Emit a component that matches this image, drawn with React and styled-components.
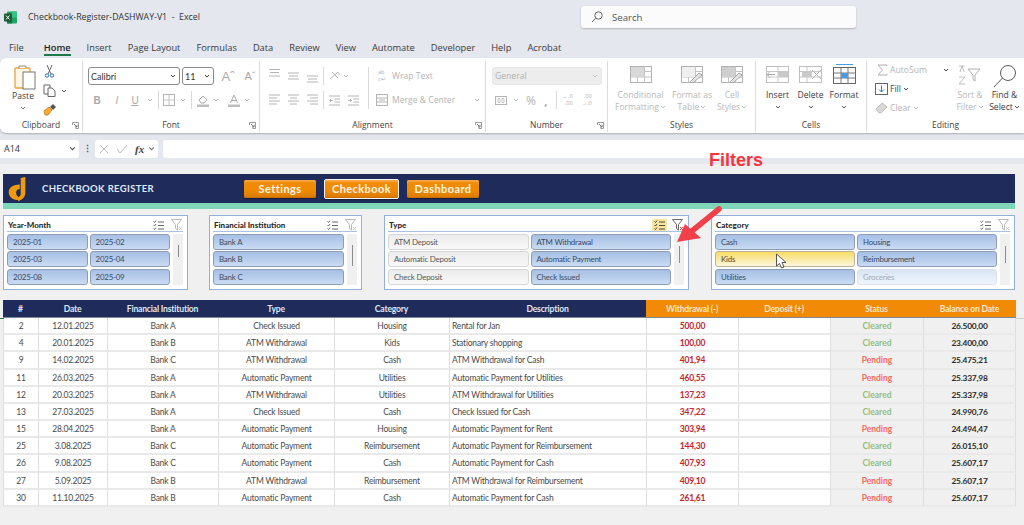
import React from "react";
import styled, { createGlobalStyle, css } from "styled-components";

const GlobalStyle = createGlobalStyle`
  html, body {
    margin: 0;
    width: 1024px;
    height: 525px;
    overflow: hidden;
    background: #e4e7ed;
    font-family: "Open Sans", "Liberation Sans", sans-serif;
  }
  * { box-sizing: border-box; }
`;

const Page = styled.div`
  position: relative;
  display: flex;
  flex-direction: column;
  width: 1024px;
  height: 525px;
  overflow: hidden;
`;

/* ---- title bar ---- */
const TitleBar = styled.div`
  display: flex;
  align-items: center;
  height: 34px;
  padding: 0 0 0 4px;
  color: #333;
  font-size: 8.8px;
`;
const WindowTitle = styled.span`
  margin-left: 11px;
  width: 553px;
  white-space: pre;
`;
const SearchBox = styled.div`
  display: flex;
  align-items: center;
  gap: 9px;
  width: 275px;
  height: 22px;
  padding-left: 10px;
  background: #fbfbfc;
  border-radius: 3px;
  box-shadow: 0 1px 2px rgba(0, 0, 0, 0.22);
  color: #555;
  font-size: 9.6px;
`;

/* ---- tabs ---- */
const TabBar = styled.div`
  display: flex;
  gap: 16px;
  height: 24px;
  padding: 6px 0 0 9px;
  font-size: 9.3px;
  color: #3a3a3a;
`;
const Tab = styled.div`
  position: relative;
  height: 15px;
  line-height: 15px;
  &:first-child {
    margin-right: 4px;
  }
  ${(p) =>
    p.$active &&
    css`
      font-weight: 600;
      color: #222;
      &::after {
        content: "";
        position: absolute;
        left: 0;
        right: 0;
        bottom: -1px;
        height: 2px;
        background: #1b7a47;
      }
    `}
`;

/* ---- ribbon ---- */
const Ribbon = styled.div`
  display: flex;
  height: 75px;
  background: #fff;
  border-radius: 6px 0 0 6px;
  box-shadow: 0 1px 2px rgba(0, 0, 0, 0.25);
`;
const Group = styled.div`
  position: relative;
  display: flex;
  flex-direction: column;
  flex: 0 0 ${(p) => p.$w}px;
  min-width: 0;
  margin: 3px 0 1px;
  border-right: ${(p) => (p.$last ? "none" : "1px solid #dcdcdc")};
`;
const GroupBody = styled.div`
  flex: 1;
  display: flex;
  padding: ${(p) => p.$pad || "0"};
`;
const GroupLabel = styled.div`
  height: 14px;
  text-align: center;
  font-size: 8.5px;
  line-height: 14px;
  color: #444;
`;
const Launcher = styled.svg`
  position: absolute;
  right: 3px;
  bottom: 3px;
  width: 7px;
  height: 7px;
`;
const Rows = styled.div`
  display: flex;
  flex-direction: column;
  gap: ${(p) => p.$gap ?? 6}px;
  flex: ${(p) => (p.$w ? `0 0 ${p.$w}px` : "0 1 auto")};
  margin-left: ${(p) => p.$ml || 0}px;
`;
const Row = styled.div`
  display: flex;
  align-items: center;
  gap: ${(p) => p.$gap || 0}px;
  height: ${(p) => p.$h || 18}px;
  margin-left: ${(p) => p.$ml || 0}px;
`;
const Space = styled.span`
  flex: 0 0 ${(p) => p.$w}px;
`;
const PullBack = styled.span`
  display: flex;
  margin-left: -6px;
`;
const Select = styled.div`
  display: flex;
  align-items: center;
  justify-content: space-between;
  width: ${(p) => p.$w}px;
  height: 18px;
  padding: 0 3px 0 2px;
  font-size: ${(p) => (p.$off ? 8.6 : 9)}px;
  border-radius: 3px;
  color: ${(p) => (p.$off ? "#b0b0b0" : "#333")};
  border: 1px solid ${(p) => (p.$off ? "#e6e6e6" : "#8a8a8a")};
  background: ${(p) => (p.$off ? "#ededed" : "#fff")};
  font-family: ${(p) => (p.$off ? '"Open Sans", sans-serif' : "Lato, sans-serif")};
`;
const Sep = styled.div`
  flex: 0 0 1px;
  height: 18px;
  margin: 0 ${(p) => p.$m || 0}px;
  background: #d9d9d9;
`;
const AlignBlock = styled.div`
  display: flex;
  flex-direction: column;
  gap: 6px;
  flex: 0 0 100px;
  height: 42px;
  border-right: 1px solid #d9d9d9;
`;
const MergeBlock = styled.div`
  display: flex;
  flex-direction: column;
  gap: 6px;
  padding-left: 8px;
`;
const GreyText = styled.span`
  font-size: ${(p) => p.$size || 8.6}px;
  font-weight: ${(p) => p.$weight || 400};
  color: ${(p) => (p.$on ? "#444" : "#b4b4b4")};
  margin-left: ${(p) => p.$ml || 0}px;
  white-space: pre;
`;
const FontGlyph = styled.span`
  flex: 0 0 ${(p) => p.$w || 18}px;
  text-align: center;
  font-family: "Liberation Sans", sans-serif;
  font-size: ${(p) => p.$size || 10}px;
  font-weight: ${(p) => (p.$bold ? 700 : 400)};
  font-style: ${(p) => (p.$italic ? "italic" : "normal")};
  text-decoration: ${(p) => (p.$under ? "underline" : "none")};
  color: #a8a8a8;
`;
const TinyStack = styled.span`
  display: flex;
  flex-direction: column;
  align-items: ${(p) => (p.$end ? "flex-end" : "flex-start")};
  flex: 0 0 ${(p) => p.$w || 12}px;
  font-size: 5.6px;
  line-height: 7px;
  color: #b0b0b0;
  white-space: pre;
`;
const BigButton = styled.div`
  display: flex;
  flex-direction: column;
  align-items: center;
  flex: 0 0 ${(p) => p.$w}px;
  margin-top: ${(p) => p.$mt || 0}px;
  font-size: 8.6px;
  line-height: 12px;
  color: ${(p) => (p.$off ? "#b8b8b8" : "#3c3c3c")};
  text-align: center;
  white-space: nowrap;
  > svg {
    margin-top: 3px;
  }
`;
const BigIcon = styled.div`
  height: ${(p) => p.$h || 25}px;
  padding-top: ${(p) => p.$top ?? 2}px;
  display: flex;
  align-items: flex-start;
  justify-content: center;
`;
const LabelLine = styled.span`
  display: inline-flex;
  align-items: center;
  gap: 1px;
`;

/* ---- formula bar ---- */
const FormulaBar = styled.div`
  display: flex;
  align-items: center;
  height: 19px;
  margin-top: 6px;
`;
const NameBox = styled.div`
  display: flex;
  align-items: center;
  justify-content: space-between;
  width: 79px;
  height: 18px;
  padding: 0 3px 0 4px;
  background: #fff;
  border-radius: 0 3px 3px 0;
  font-size: 9px;
  color: #333;
`;
const Dots = styled.div`
  width: 16px;
  text-align: center;
  font-size: 9px;
  font-weight: 700;
  color: #555;
  line-height: 18px;
`;
const FxBox = styled.div`
  display: flex;
  align-items: center;
  gap: 7px;
  width: 63px;
  height: 18px;
  padding-left: 4px;
  background: #fff;
  border-radius: 3px;
`;
const FxText = styled.span`
  margin-right: -3px;
  font-family: "Liberation Serif", serif;
  font-style: italic;
  font-weight: 700;
  font-size: 11px;
  color: #444;
`;
const FormulaInput = styled.div`
  flex: 1;
  height: 18px;
  margin-left: 5px;
  background: #fff;
  border-radius: 3px 0 0 3px;
`;
const Strip = styled.div`
  height: 6px;
`;

/* ---- sheet ---- */
const Sheet = styled.div`
  flex: 1;
  padding: 10px 0 0 3px;
  background: #f0f0f0;
  font-family: Lato, "Open Sans", sans-serif;
`;
const Banner = styled.div`
  display: flex;
  align-items: center;
  width: 1012px;
  height: 35px;
  padding: 0 0 0 5px;
  background: #1f2c5b;
  border-bottom: 6px solid #7fd6b9;
`;
const BannerTitle = styled.div`
  width: 202px;
  margin-left: 15px;
  color: #dfe6f2;
  font-size: 9.5px;
  font-weight: 700;
  letter-spacing: 0.35px;
`;
const NavGroup = styled.div`
  display: flex;
  align-items: center;
  gap: 8px;
`;
const NavButton = styled.div`
  display: flex;
  align-items: center;
  justify-content: center;
  width: ${(p) => p.$w}px;
  height: ${(p) => (p.$active ? 20 : 18)}px;
  background: linear-gradient(#ef8d0e, #f08a02 55%, #d97a00);
  border-radius: 2px;
  border: ${(p) => (p.$active ? "1.5px solid #f2f4f8" : "none")};
  box-shadow: inset 0 2px 0 #f5a33c, inset 0 -1px 0 #c86f00, 0 1px 1px rgba(0, 0, 0, 0.35);
  color: #fdf4e3;
  font-size: 11px;
  font-weight: 700;
  letter-spacing: 0.4px;
`;
const Slicers = styled.div`
  display: flex;
  margin-top: 6px;
`;
const Slicer = styled.div`
  display: flex;
  flex-direction: column;
  flex: 0 0 ${(p) => p.$w}px;
  margin-right: ${(p) => p.$mr || 0}px;
  height: 75px;
  padding: 3px 4px 4px 3px;
  background: #fff;
  border: 1px solid #93b0da;
`;
const SlicerHead = styled.div`
  display: flex;
  align-items: center;
  justify-content: space-between;
  height: 13px;
  margin-bottom: 2px;
  padding: 0 0 1px 1px;
  border-bottom: 1px solid #a9c2e4;
  font-size: 8px;
  font-weight: 900;
  color: #2c2c2c;
`;
const SlicerTools = styled.div`
  display: flex;
  align-items: center;
  gap: 7px;
`;
const ToolBox = styled.div`
  display: flex;
  padding: 1px 2px;
  margin-right: -2px;
  background: ${(p) => (p.$on ? "#f7e4a0" : "transparent")};
  border-radius: 1px;
`;
const SlicerBody = styled.div`
  flex: 1;
  display: flex;
  gap: 3px;
`;
const ItemGrid = styled.div`
  flex: 1;
  display: grid;
  grid-template-columns: repeat(${(p) => p.$cols}, 1fr);
  grid-auto-rows: 16px;
  gap: 1.4px 2px;
`;
const itemStates = {
  on: css`
    background: linear-gradient(#a6bfe4, #c9dbf3);
    border-color: #8e9db5;
    color: #3a4a63;
  `,
  off: css`
    background: linear-gradient(#ececec, #f8f8f8);
    border-color: #d6d6d6;
    color: #565656;
  `,
  hover: css`
    background: linear-gradient(#f8dc64, #fdf6dd);
    border-color: #b9b39a;
    color: #4f4a32;
  `,
  empty: css`
    background: linear-gradient(#d9e5f5, #eef4fc);
    border-color: #dde3ec;
    color: #a9a9a9;
  `,
};
const Item = styled.div`
  display: flex;
  align-items: center;
  padding-left: 5px;
  border: 1px solid;
  border-radius: 3px;
  font-size: 7.9px;
  letter-spacing: -0.2px;
  ${(p) => itemStates[p.$state || "on"]}
`;
const ScrollTrack = styled.div`
  position: relative;
  flex: 0 0 10px;
  background: #f0f0f0;
  &::after {
    content: "";
    position: absolute;
    left: 50%;
    top: ${(p) => p.$top || 12}px;
    width: 1px;
    height: ${(p) => p.$h || 12}px;
    background: #8b8b8b;
  }
`;

/* ---- table ---- */
const Table = styled.div`
  display: grid;
  grid-template-columns: 35px 69px 111px 116px 115px 197px 92px 92px 93px 93px;
  grid-template-rows: 18px;
  grid-auto-rows: 17.18px;
  margin-top: 10px;
  width: 1013px;
  letter-spacing: -0.2px;
`;
const HeadCell = styled.div`
  display: flex;
  align-items: center;
  justify-content: center;
  background: ${(p) => (p.$orange ? "#f28a05" : "#1f2c5b")};
  color: ${(p) => (p.$orange ? "#fbe6c8" : "#dfe6f2")};
  border-bottom: 1px solid #7d8799;
  font-size: 8.6px;
  font-weight: 700;
  &:last-of-type {
    margin-right: 1px;
  }
`;
const cellKinds = {
  plain: css`
    color: #4a4a4a;
  `,
  desc: css`
    justify-content: flex-start;
    padding-left: 2px;
    color: #4a4a4a;
  `,
  out: css`
    color: #c6242f;
    font-weight: 700;
  `,
  cleared: css`
    background: #f0f0f0;
    color: #94bd7f;
    font-weight: 700;
    letter-spacing: 0;
  `,
  pending: css`
    background: #f0f0f0;
    color: #fb6a60;
    font-weight: 700;
    letter-spacing: 0;
  `,
  balance: css`
    background: #f0f0f0;
    color: #2b2b2b;
    font-weight: 700;
    font-size: 8.4px;
    border-right: 1px solid #dedede;
  `,
};
const Cell = styled.div`
  display: flex;
  align-items: center;
  justify-content: center;
  padding-top: 1px;
  background: #fff;
  border-left: 1px solid #dedede;
  border-bottom: 2px solid #e9e9e9;
  font-size: 8.5px;
  white-space: nowrap;
  ${(p) => cellKinds[p.$kind || "plain"]}
`;

/* ---- things laid over the picture ---- */
const FiltersNote = styled.div`
  position: absolute;
  left: 709px;
  top: 150px;
  color: #f5363f;
  font-family: "Liberation Sans", sans-serif;
  font-size: 18px;
  font-weight: 700;
  line-height: 21px;
`;
const Overlay = styled.svg`
  position: absolute;
  left: ${(p) => p.$x}px;
  top: ${(p) => p.$y}px;
`;
const CellMark = styled.div`
  position: absolute;
  left: 0;
  top: 318px;
  width: 4px;
  height: 1px;
  background: #1b7a47;
`;
const SheetEdge = styled.div`
  position: absolute;
  left: 1016px;
  right: 0;
  top: 318px;
  height: 1px;
  background: #cfcfcf;
`;

/* ---- small drawings ---- */
const Chev = ({ c = "#777", s = 6 }) => (
  <svg width={s} height={s} viewBox="0 0 6 6">
    <path d="M1 2l2 2 2-2" fill="none" stroke={c} strokeWidth="1" />
  </svg>
);
const Draw = ({ w, h, children }) => (
  <svg width={w} height={h} viewBox={`0 0 ${w} ${h}`} fill="none">
    {children}
  </svg>
);
const Lines = ({ ys, xs }) => (
  <Draw w={11} h={14}>
    {ys.map((y, i) => (
      <path key={i} d={`M${xs[i][0]} ${y}H${xs[i][1]}`} stroke="#b4b4b4" />
    ))}
  </Draw>
);
const DialogMark = () => (
  <Launcher viewBox="0 0 7 7" fill="none">
    <path d="M.5 3V.5H6.500V6.500H3.500" stroke="#9a9a9a" />
    <path d="M2 2l3 3M5 3v2H3" stroke="#777" />
  </Launcher>
);
const MultiSelect = ({ on }) => (
  <Draw w={11} h={10}>
    {[1.5, 5, 8.5].map((y) => (
      <g key={y}>
        <path d={`M.5 ${y}l1 1 1.500-2`} stroke={on ? "#4d4a36" : "#666"} />
        <path d={`M5 ${y + 0.5}H11`} stroke={on ? "#4d4a36" : "#666"} />
      </g>
    ))}
  </Draw>
);
const ClearFilter = ({ on }) => (
  <Draw w={12} h={12}>
    <path d="M.5.5h10L6.500 5.500V11L4.500 9.500V5.500z" stroke={on ? "#666" : "#b9b9b9"} />
    <path d="M8 8l3 3M11 8l-3 3" stroke={on ? "#e0403c" : "#c9c9c9"} />
  </Draw>
);
const Logo = () => (
  <svg width="19" height="24" viewBox="0 0 19 26">
    <path d="M13 1l5-1v17c0 5-4 8-8 9v-4c2-.5 3-2 3-4z" fill="#f29a0e" />
    <path d="M12 8v5c-2 0-4 1-4 4s2 4 2 4v4C5 25 0 22 0 16.500 0 11 5 8 12 8z" fill="#f29a0e" />
  </svg>
);
const ExcelIcon = () => (
  <svg width="13" height="13" viewBox="0 0 13 13">
    <rect x="3" y="0.5" width="10" height="12" rx="1" fill="#21a366" />
    <rect x="8" y="0.5" width="5" height="6" fill="#33c481" />
    <rect x="3" y="6.500" width="5" height="6" fill="#107c41" />
    <rect x="0" y="2.500" width="8" height="8" rx="1" fill="#185c37" />
    <path d="M2 4.500l3.500 4M5.500 4.500l-3.500 4" stroke="#fff" strokeWidth="1" />
  </svg>
);
const SearchIcon = () => (
  <Draw w={12} h={12}>
    <circle cx="7.500" cy="4.500" r="3.700" stroke="#666" />
    <path d="M4.800 7.200L1 11" stroke="#666" />
  </Draw>
);
const PasteIcon = () => (
  <Draw w={26} h={26}>
    <g transform="translate(4)">
      <rect x="1" y="4" width="15" height="20" rx="1" stroke="#e8a33c" strokeWidth="1.300" fill="#fff6e6" />
      <path d="M5 4V2h7v2" stroke="#8d8d8d" fill="#fff" />
      <rect x="9" y="8" width="12" height="17" fill="#fff" stroke="#777" />
    </g>
  </Draw>
);
const CutIcon = () => (
  <Draw w={13} h={13}>
    <path d="M4 0l4 9M9 0L5 9" stroke="#666" />
    <circle cx="4" cy="10.500" r="1.700" stroke="#2a6fc0" />
    <circle cx="9" cy="10.500" r="1.700" stroke="#2a6fc0" />
  </Draw>
);
const CopyIcon = () => (
  <Draw w={13} h={13}>
    <path d="M1 1h6v9H1z" stroke="#666" fill="#fff" />
    <path d="M5 4h4l3 3v5.500H5z" stroke="#666" fill="#fff" />
  </Draw>
);
const PainterIcon = () => (
  <Draw w={13} h={12}>
    <path d="M1 7l5-4 3 3-4 5H2z" fill="#f6a93b" stroke="#d58a1e" />
    <path d="M7 3l3-3 3 3-3 3z" fill="#555" />
  </Draw>
);
const BorderIcon = () => (
  <Draw w={12} h={12}>
    <rect x=".5" y=".5" width="11" height="11" stroke="#b4b4b4" />
    <path d="M6 .5v11M.5 6h11" stroke="#c4c4c4" />
  </Draw>
);
const FillIcon = () => (
  <Draw w={12} h={13}>
    <path d="M2 6l4-4 4 4-3 3H4z" stroke="#a8a8a8" />
    <rect x="0" y="10.500" width="12" height="2.500" fill="#bdbdbd" />
  </Draw>
);
const FontColorIcon = () => (
  <Draw w={12} h={13}>
    <path d="M2.500 9L6 1l3.500 8M3.800 6.500h4.400" stroke="#a8a8a8" />
    <rect x="0" y="10.500" width="12" height="2.500" fill="#bdbdbd" />
  </Draw>
);
const OrientIcon = () => (
  <Draw w={12} h={12}>
    <path d="M1 9L9 2M3 2l6 6" stroke="#b4b4b4" />
    <path d="M9 2l2 3" stroke="#c9c9c9" />
  </Draw>
);
const IndentIcon = ({ flip }) => (
  <Draw w={11} h={11}>
    <path d="M0 1h11M0 10h11M5.500 4H11M5.500 7H11" stroke="#b4b4b4" />
    <path d={flip ? "M0 5.500h3.500M2 4l1.500 1.500L2 7" : "M4 5.500H.5M2 4L.5 5.500 2 7"} stroke="#b4b4b4" />
  </Draw>
);
const MergeIcon = () => (
  <Draw w={12} h={12}>
    <rect x=".5" y=".5" width="11" height="11" stroke="#b4b4b4" />
    <path d="M.5 4h11M.5 8h11M3 6h6" stroke="#b4b4b4" />
  </Draw>
);
const CurrencyIcon = () => (
  <Draw w={12} h={11}>
    <rect x=".5" y="1.500" width="11" height="8" stroke="#b4b4b4" />
    <path d="M3 3.500h2v4H3zM7 3.500h2v4H7z" stroke="#c6c6c6" />
  </Draw>
);
const StyleGrid = ({ tint = "#d8d8d8", brush }) => (
  <Draw w={22} h={17}>
    <rect x=".5" y=".5" width="21" height="16" stroke="#b0b0b0" />
    <path d="M7.500.5v16M14.500.5v16M.5 5.500h21M.5 11h21" stroke="#c4c4c4" />
    <rect x="1" y="1" width="13" height="10" fill={tint} />
    {brush && <path d="M9 16l9-9 3 2-9 8z" fill="#e4e4e4" stroke="#a8a8a8" />}
  </Draw>
);
const InsertCells = () => (
  <Draw w={23} h={17}>
    <rect x=".5" y=".5" width="22" height="16" stroke="#c0c0c0" />
    <path d="M.5 5.500h22M.5 11h22M12 .5v16" stroke="#c8c8c8" />
    <rect x="12" y="6" width="10" height="5" fill="#c8c8c8" />
    <path d="M9 8.500H1M4 5.500l-3 3 3 3" stroke="#a9a9a9" fill="#fff" />
  </Draw>
);
const DeleteCells = () => (
  <Draw w={23} h={17}>
    <rect x=".5" y=".5" width="22" height="16" stroke="#c0c0c0" />
    <path d="M.5 5.500h22M.5 11h22M8 .5v16" stroke="#c8c8c8" />
    <rect x="3" y="6" width="10" height="5" fill="#c8c8c8" />
    <path d="M13 4l9 9M22 4l-9 9" stroke="#b4b4b4" />
  </Draw>
);
const FormatCells = () => (
  <Draw w={23} h={21}>
    <path d="M3 .5h17" stroke="#4a9be0" />
    <rect x=".5" y="3.500" width="22" height="16" stroke="#666" fill="#fff" />
    <path d="M.5 9h22M.5 14h22M8 3.500v16M15 3.500v16" stroke="#777" />
    <rect x="8" y="9" width="7" height="5" fill="#4a9be0" />
  </Draw>
);
const SigmaIcon = () => (
  <Draw w={11} h={12}>
    <path d="M10 2V1H1l4.500 5L1 11h9v-1" stroke="#b0b0b0" />
  </Draw>
);
const FillDown = () => (
  <Draw w={13} h={12}>
    <rect x=".5" y=".5" width="12" height="11" stroke="#666" />
    <path d="M6.500 2.500v6M4 6.500l2.500 2.500L9 6.500" stroke="#2a7ad0" />
  </Draw>
);
const EraserIcon = () => (
  <Draw w={13} h={12}>
    <path d="M1 7l6-6 5 4-6 6H4z" fill="#d8d8d8" stroke="#bdbdbd" />
  </Draw>
);
const SortIcon = () => (
  <Draw w={24} h={22}>
    <path d="M1 2h6M2 8l2-6 2 6M1 13h6l-6 7h6" stroke="#bdbdbd" />
    <path d="M10 5h12l-5 6v6l-2-1.500V11z" stroke="#b0b0b0" />
  </Draw>
);
const FindIcon = () => (
  <Draw w={24} h={24}>
    <circle cx="15" cy="9" r="7.500" stroke="#5a5a5a" />
    <path d="M9.500 14L1 23" stroke="#5a5a5a" />
  </Draw>
);

/* ---- data ---- */
const rows = [
  ["2", "12.01.2025", "Bank A", "Check Issued", "Housing", "Rental for Jan", "500,00", "Cleared", "26.500,00"],
  ["4", "20.01.2025", "Bank B", "ATM Withdrawal", "Kids", "Stationary shopping", "100,00", "Cleared", "23.400,00"],
  ["9", "14.02.2025", "Bank C", "ATM Withdrawal", "Cash", "ATM Withdrawal for Cash", "401,94", "Pending", "25.475,21"],
  ["11", "26.03.2025", "Bank A", "Automatic Payment", "Utilities", "Automatic Payment for Utilities", "460,55", "Pending", "25.337,98"],
  ["12", "20.03.2025", "Bank A", "ATM Withdrawal", "Utilities", "ATM Withdrawal for Utilities", "137,23", "Cleared", "25.337,98"],
  ["13", "27.03.2025", "Bank A", "Check Issued", "Cash", "Check Issued for Cash", "347,22", "Cleared", "24.990,76"],
  ["15", "28.04.2025", "Bank A", "Automatic Payment", "Housing", "Automatic Payment for Rent", "303,94", "Pending", "24.494,47"],
  ["25", "3.08.2025", "Bank C", "Automatic Payment", "Reimbursement", "Automatic Payment for Reimbursement", "144,30", "Cleared", "26.015,10"],
  ["26", "9.08.2025", "Bank C", "Automatic Payment", "Cash", "Automatic Payment for Cash", "407,93", "Cleared", "25.607,17"],
  ["27", "5.09.2025", "Bank B", "ATM Withdrawal", "Reimbursement", "ATM Withdrawal for Reimbursement", "409,10", "Pending", "25.607,17"],
  ["30", "11.10.2025", "Bank B", "Automatic Payment", "Cash", "Automatic Payment for Cash", "261,61", "Pending", "25.607,17"],
];
const heads = [
  ["#"], ["Date"], ["Financial Institution"], ["Type"], ["Category"], ["Description"],
  ["Withdrawal (-)", true], ["Deposit (+)", true], ["Status", true], ["Balance on Date", true],
];
const slicers = [
  {
    title: "Year-Month", w: 185, mr: 21, cols: 2, top: 11, h: 12,
    items: [["2025-01"], ["2025-02"], ["2025-03"], ["2025-04"], ["2025-08"], ["2025-09"]],
  },
  {
    title: "Financial Institution", w: 153, mr: 22, cols: 1, top: 11, h: 21,
    items: [["Bank A"], ["Bank B"], ["Bank C"]],
  },
  {
    title: "Type", w: 305, mr: 22, cols: 2, top: 12, h: 17, multi: true,
    items: [
      ["ATM Deposit", "off"], ["ATM Withdrawal"], ["Automatic Deposit", "off"],
      ["Automatic Payment"], ["Check Deposit", "off"], ["Check Issued"],
    ],
  },
  {
    title: "Category", w: 304, cols: 2, top: 12, h: 17,
    items: [["Cash"], ["Housing"], ["Kids", "hover"], ["Reimbursement"], ["Utilities"], ["Groceries", "empty"]],
  },
];

const App = () => (
  <Page>
    <GlobalStyle />
    <TitleBar>
      <ExcelIcon />
      <WindowTitle>Checkbook-Register-DASHWAY-V1  -  Excel</WindowTitle>
      <SearchBox>
        <SearchIcon />
        Search
      </SearchBox>
    </TitleBar>

    <TabBar>
      {["File", "Home", "Insert", "Page Layout", "Formulas", "Data", "Review", "View", "Automate", "Developer", "Help", "Acrobat"].map((t) => (
        <Tab key={t} $active={t === "Home"}>{t}</Tab>
      ))}
    </TabBar>

    <Ribbon>
      <Group $w={83}>
        <GroupBody $pad="3px 0 0 0">
          <BigButton $w={46}>
            <BigIcon $h={26} $top={0}><PasteIcon /></BigIcon>
            <span>Paste</span>
            <Chev />
          </BigButton>
          <Rows $gap={4} $ml={-3}>
            <Row $h={15}><CutIcon /></Row>
            <Row $h={15} $gap={5}><CopyIcon /><Chev c="#555" /></Row>
            <Row $h={15}><PainterIcon /></Row>
          </Rows>
        </GroupBody>
        <GroupLabel>Clipboard</GroupLabel>
        <DialogMark />
      </Group>

      <Group $w={177}>
        <GroupBody $pad="6px 0 0 5px">
          <Rows>
            <Row $gap={2}>
              <Select $w={92}>Calibri<Chev c="#444" /></Select>
              <Select $w={32}>11<Chev c="#444" /></Select>
              <Space $w={3} />
              <FontGlyph $w={14} $size={13}>Aˆ</FontGlyph>
              <Space $w={4} />
              <FontGlyph $w={14} $size={11}>Aˇ</FontGlyph>
            </Row>
            <Row>
              <FontGlyph $bold>B</FontGlyph>
              <Space $w={2} />
              <FontGlyph $italic>I</FontGlyph>
              <FontGlyph $under>U</FontGlyph>
              <Space $w={3} />
              <Chev c="#bbb" />
              <Space $w={5} />
              <Sep />
              <Space $w={4} />
              <BorderIcon />
              <Space $w={5} />
              <Chev c="#bbb" />
              <Space $w={5} />
              <Sep />
              <Space $w={5} />
              <FillIcon />
              <Space $w={4} />
              <Chev c="#bbb" />
              <Space $w={9} />
              <FontColorIcon />
              <Space $w={4} />
              <Chev c="#bbb" />
            </Row>
          </Rows>
        </GroupBody>
        <GroupLabel>Font</GroupLabel>
        <DialogMark />
      </Group>

      <Group $w={226}>
        <GroupBody $pad="6px 0 0 9px">
          <AlignBlock>
            <Row $gap={8}>
              <Lines ys={[0.5, 3.5, 7]} xs={[[0, 11], [1, 10], [0, 11]]} />
              <Lines ys={[4, 7, 10]} xs={[[0, 11], [1, 10], [0, 11]]} />
              <Lines ys={[7, 10, 13]} xs={[[0, 11], [1, 10], [0, 11]]} />
              <Sep $m={-3} />
              <OrientIcon />
              <PullBack><Chev c="#bbb" /></PullBack>
            </Row>
            <Row $gap={8}>
              <Lines ys={[2, 5, 8, 11]} xs={[[0, 11], [0, 8], [0, 11], [0, 8]]} />
              <Lines ys={[2, 5, 8, 11]} xs={[[0, 11], [2, 9], [0, 11], [2, 9]]} />
              <Lines ys={[2, 5, 8, 11]} xs={[[0, 11], [3, 11], [0, 11], [3, 11]]} />
              <Sep $m={-3} />
              <IndentIcon />
              <IndentIcon flip />
            </Row>
          </AlignBlock>
          <MergeBlock>
            <Row $ml={1} $gap={2}>
              <TinyStack><span>ab</span><span>c↵</span></TinyStack>
              <GreyText>Wrap Text</GreyText>
            </Row>
            <Row $ml={-1} $gap={4}>
              <MergeIcon />
              <GreyText>Merge &amp; Center</GreyText>
              <Space $w={11} />
              <Chev c="#bbb" />
            </Row>
          </MergeBlock>
        </GroupBody>
        <GroupLabel>Alignment</GroupLabel>
        <DialogMark />
      </Group>

      <Group $w={122}>
        <GroupBody $pad="6px 0 0 6px">
          <Rows>
            <Select $w={110} $off>General<Chev c="#c4c4c4" /></Select>
            <Row $ml={3}>
              <CurrencyIcon />
              <Space $w={6} />
              <Chev c="#bbb" />
              <Space $w={7} />
              <GreyText $size={12}>%</GreyText>
              <Space $w={8} />
              <GreyText $size={13} $weight={700}>,</GreyText>
              <Space $w={8} />
              <Sep />
              <Space $w={4} />
              <TinyStack $end $w={12}><span>←.0</span><span>.00</span></TinyStack>
              <Space $w={7} />
              <TinyStack $end $w={12}><span>.00</span><span>→.0</span></TinyStack>
            </Row>
          </Rows>
        </GroupBody>
        <GroupLabel>Number</GroupLabel>
        <DialogMark />
      </Group>

      <Group $w={148}>
        <GroupBody $pad="3px 0 0 3px">
          <BigButton $w={59} $off>
            <BigIcon><StyleGrid /></BigIcon>
            <span>Conditional</span>
            <LabelLine>Formatting <Chev c="#c0c0c0" /></LabelLine>
          </BigButton>
          <BigButton $w={44} $off>
            <BigIcon><StyleGrid tint="#efefef" brush /></BigIcon>
            <span>Format as</span>
            <LabelLine>Table <Chev c="#c0c0c0" /></LabelLine>
          </BigButton>
          <BigButton $w={36} $off>
            <BigIcon><StyleGrid tint="#cfcfcf" brush /></BigIcon>
            <span>Cell</span>
            <LabelLine>Styles <Chev c="#c0c0c0" /></LabelLine>
          </BigButton>
        </GroupBody>
        <GroupLabel>Styles</GroupLabel>
      </Group>

      <Group $w={111}>
        <GroupBody $pad="3px 0 0 5px">
          <BigButton $w={33}>
            <BigIcon><InsertCells /></BigIcon>
            <span>Insert</span>
            <Chev c="#555" />
          </BigButton>
          <BigButton $w={33}>
            <BigIcon><DeleteCells /></BigIcon>
            <span>Delete</span>
            <Chev c="#555" />
          </BigButton>
          <BigButton $w={34}>
            <BigIcon $top={0}><FormatCells /></BigIcon>
            <span>Format</span>
            <Chev c="#555" />
          </BigButton>
        </GroupBody>
        <GroupLabel>Cells</GroupLabel>
      </Group>

      <Group $w={157} $last>
        <GroupBody $pad="0 0 0 8px">
          <Rows $gap={1} $w={76}>
            <Row $h={18} $ml={2} $gap={2}>
              <SigmaIcon />
              <GreyText>AutoSum</GreyText>
              <Space $w={12} />
              <Chev c="#444" />
            </Row>
            <Row $h={18} $gap={2}>
              <FillDown />
              <GreyText $on>Fill</GreyText>
              <Chev c="#444" />
            </Row>
            <Row $h={18} $gap={2}>
              <EraserIcon />
              <GreyText>Clear</GreyText>
              <Chev c="#c0c0c0" />
            </Row>
          </Rows>
          <BigButton $w={38} $off $mt={3}>
            <BigIcon $top={0}><SortIcon /></BigIcon>
            <span>Sort &amp;</span>
            <LabelLine>Filter <Chev c="#c0c0c0" /></LabelLine>
          </BigButton>
          <BigButton $w={31} $mt={3}>
            <BigIcon $top={0}><FindIcon /></BigIcon>
            <span>Find &amp;</span>
            <LabelLine>Select <Chev c="#555" /></LabelLine>
          </BigButton>
        </GroupBody>
        <GroupLabel>Editing</GroupLabel>
      </Group>
    </Ribbon>

    <FormulaBar>
      <NameBox>A14<Chev c="#555" s={7} /></NameBox>
      <Dots>⋮</Dots>
      <FxBox>
        <Draw w={10} h={10}><path d="M1 1l8 8M9 1L1 9" stroke="#bdbdbd" /></Draw>
        <Draw w={12} h={10}><path d="M1 5l3 4 7-8" stroke="#bdbdbd" /></Draw>
        <FxText>fx</FxText>
        <Chev c="#777" s={7} />
      </FxBox>
      <FormulaInput />
    </FormulaBar>
    <Strip />

    <Sheet>
      <Banner>
        <Logo />
        <BannerTitle>CHECKBOOK REGISTER</BannerTitle>
        <NavGroup>
          <NavButton $w={72}>Settings</NavButton>
          <NavButton $w={75} $active>Checkbook</NavButton>
          <NavButton $w={72}>Dashboard</NavButton>
        </NavGroup>
      </Banner>

      <Slicers>
        {slicers.map((s) => (
          <Slicer key={s.title} $w={s.w} $mr={s.mr}>
            <SlicerHead>
              {s.title}
              <SlicerTools>
                <ToolBox $on={s.multi}><MultiSelect on={s.multi} /></ToolBox>
                <ClearFilter on={s.multi} />
              </SlicerTools>
            </SlicerHead>
            <SlicerBody>
              <ItemGrid $cols={s.cols}>
                {s.items.map(([label, state]) => (
                  <Item key={label} $state={state}>{label}</Item>
                ))}
              </ItemGrid>
              <ScrollTrack $top={s.top} $h={s.h} />
            </SlicerBody>
          </Slicer>
        ))}
      </Slicers>

      <Table>
        {heads.map(([label, orange]) => (
          <HeadCell key={label} $orange={orange}>{label}</HeadCell>
        ))}
        {rows.map((r) => (
          <React.Fragment key={r[0]}>
            <Cell>{r[0]}</Cell>
            <Cell>{r[1]}</Cell>
            <Cell>{r[2]}</Cell>
            <Cell>{r[3]}</Cell>
            <Cell>{r[4]}</Cell>
            <Cell $kind="desc">{r[5]}</Cell>
            <Cell $kind="out">{r[6]}</Cell>
            <Cell />
            <Cell $kind={r[7] === "Cleared" ? "cleared" : "pending"}>{r[7]}</Cell>
            <Cell $kind="balance">{r[8]}</Cell>
          </React.Fragment>
        ))}
      </Table>
    </Sheet>

    <FiltersNote>Filters</FiltersNote>
    <Overlay $x={670} $y={204} width="56" height="46" viewBox="0 0 56 46">
      <path d="M49 5L22 27" stroke="#f0404a" strokeWidth="5.500" strokeLinecap="round" />
      <path d="M7 38L15 20L31 34z" fill="#f0404a" />
    </Overlay>
    <Overlay $x={775} $y={253} width="13" height="17" viewBox="0 0 13 17">
      <path d="M1.500 1v12l3-2.500 2 4.500 2.500-1-2-4.500h4z" fill="#fff" stroke="#555" />
    </Overlay>
    <CellMark />
    <SheetEdge />
  </Page>
);

export default App;
